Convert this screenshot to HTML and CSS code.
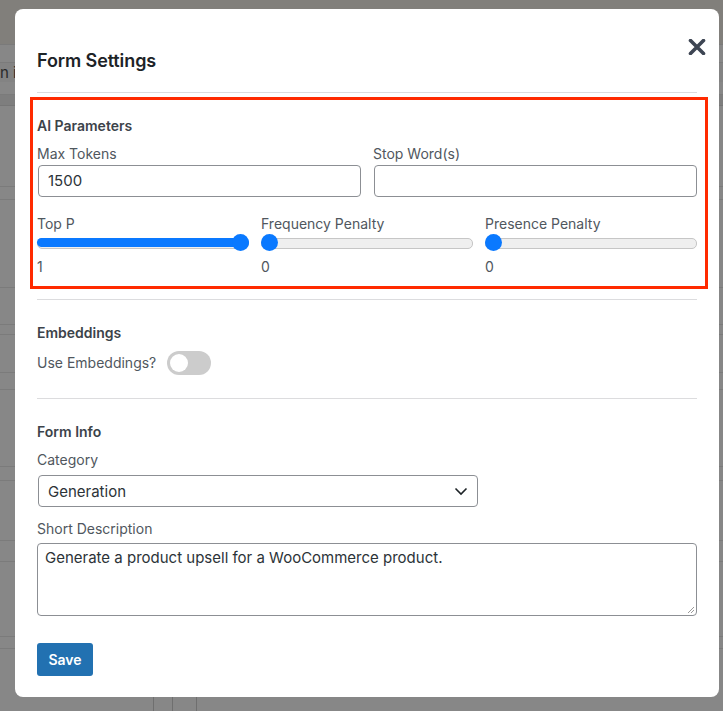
FILE: index.html
```html
<!DOCTYPE html>
<html lang="en">
<head>
<meta charset="utf-8">
<title>Form Settings</title>
<link rel="stylesheet" href="styles.css">
</head>
<body>
<div class="page">
  <div class="bg-top"></div>
  <div class="bg-row bg-h18"></div>
  <div class="bg-row bg-text"><span>n icon</span></div>
  <div class="bg-row bg-h13"></div>
  <div class="bg-band"></div>
  <div class="bg-row bg-h81"></div>
  <div class="bg-row bg-h13"></div>
  <div class="bg-row bg-h88"></div>
  <div class="bg-row bg-h37"></div>
  <div class="bg-row bg-h10"></div>
  <div class="bg-row bg-h38"></div>
  <div class="bg-row bg-h17"></div>
  <div class="bg-row bg-h77"></div>
  <div class="bg-row bg-h14"></div>
  <div class="bg-row bg-h60"></div>
  <div class="bg-row bg-h21"></div>
  <div class="bg-row bg-h75"></div>
  <div class="bg-row bg-h12"></div>
  <div class="bg-foot">
    <span class="vline"></span><span class="vline"></span><span class="vline"></span>
  </div>
</div>

<div class="modal">
  <button class="close" aria-label="Close">
    <svg width="18" height="16" viewBox="0 0 18 16"><path d="M2.5 1.5 L15.5 14.5 M15.5 1.5 L2.5 14.5" stroke="#3d4553" stroke-width="3.6" stroke-linecap="round" fill="none"/></svg>
  </button>
  <h2 class="title">Form Settings</h2>
  <hr class="divider first">

  <section class="highlight">
    <h3 class="heading">AI Parameters</h3>
    <div class="grid2">
      <div class="field">
        <label class="label">Max Tokens</label>
        <div class="input">1500</div>
      </div>
      <div class="field">
        <label class="label">Stop Word(s)</label>
        <div class="input"></div>
      </div>
    </div>
    <div class="grid3">
      <div class="field">
        <label class="label">Top P</label>
        <div class="range"><div class="fill" style="width:100%"></div><div class="thumb" style="left:100%"></div></div>
        <div class="value">1</div>
      </div>
      <div class="field">
        <label class="label">Frequency Penalty</label>
        <div class="range"><div class="fill" style="width:0%"></div><div class="thumb" style="left:0%"></div></div>
        <div class="value">0</div>
      </div>
      <div class="field">
        <label class="label">Presence Penalty</label>
        <div class="range"><div class="fill" style="width:0%"></div><div class="thumb" style="left:0%"></div></div>
        <div class="value">0</div>
      </div>
    </div>
  </section>

  <hr class="divider after-hl">

  <section class="block">
    <h3 class="heading">Embeddings</h3>
    <div class="toggle-row">
      <span class="label">Use Embeddings?</span>
      <span class="toggle"><span class="knob"></span></span>
    </div>
  </section>

  <hr class="divider after-emb">

  <section class="block">
    <h3 class="heading">Form Info</h3>
    <label class="label cat-label">Category</label>
    <div class="select">
      <span>Generation</span>
      <svg width="14" height="9" viewBox="0 0 14 9"><path d="M1.5 1.5 L7 7 L12.5 1.5" stroke="#1d2327" stroke-width="1.6" fill="none"/></svg>
    </div>
    <label class="label desc-label">Short Description</label>
    <div class="textarea">Generate a product upsell for a WooCommerce product.
      <svg class="grip" width="9" height="9" viewBox="0 0 9 9"><path d="M8 2 L2 8 M8 5 L5 8" stroke="#9a9a9a" stroke-width="1" fill="none"/></svg>
    </div>
  </section>

  <button class="save">Save</button>
</div>
</body>
</html>
```

FILE: styles.css
```css
* { box-sizing: border-box; }

html, body {
  margin: 0;
  padding: 0;
}

body {
  width: 723px;
  height: 711px;
  overflow: hidden;
  position: relative;
  background: #878787;
  font-family: Inter, "Noto Sans", sans-serif;
}

/* dimmed page behind the modal */
.page {
  display: flex;
  flex-direction: column;
  width: 723px;
  height: 711px;
}
.bg-top {
  height: 45px;
  background: #817f7b;
  border-bottom: 1px solid #7a7a7a;
  flex: none;
}
.bg-row {
  flex: none;
  border-bottom: 1px solid #7b7b7b;
}
.bg-text {
  height: 19px;
  background: #838383;
  font-size: 15px;
  line-height: 19px;
  color: #2a2a2a;
  padding-left: 0;
  border-bottom: none;
}
.bg-band {
  height: 11px;
  background: #7e7e7e;
  border-bottom: 1px solid #767676;
  flex: none;
}
.bg-h10 { height: 10px; }
.bg-h12 { height: 12px; }
.bg-h13 { height: 13px; }
.bg-h14 { height: 14px; }
.bg-h17 { height: 17px; }
.bg-h18 { height: 18px; }
.bg-h21 { height: 21px; }
.bg-h37 { height: 37px; }
.bg-h38 { height: 38px; }
.bg-h60 { height: 60px; }
.bg-h75 { height: 75px; }
.bg-h77 { height: 77px; }
.bg-h81 { height: 81px; }
.bg-h88 { height: 88px; }
.bg-foot {
  flex: 1;
  display: flex;
  padding-left: 153px;
}
.vline {
  width: 1px;
  background: #6f6f6f;
  margin-right: 18px;
}
.vline:nth-child(2) { margin-right: 23px; }

/* modal */
.modal {
  position: absolute;
  left: 15px;
  top: 9px;
  width: 704px;
  height: 688px;
  background: #fff;
  border-radius: 8px;
  padding: 40px 22px 21px;
  color: #50575e;
}

.close {
  position: absolute;
  top: 30px;
  right: 13px;
  width: 18px;
  height: 16px;
  padding: 0;
  border: 0;
  background: none;
  display: flex;
}

.title {
  margin: 0;
  font-size: 18px;
  line-height: 24px;
  font-weight: 600;
  color: #1d2327;
  letter-spacing: -0.1px;
}

.divider {
  border: 0;
  height: 1px;
  background: #dcdcde;
  margin: 0;
}
.divider.first { margin-top: 19px; }
.divider.after-hl { margin-top: 10px; }
.divider.after-emb { margin-top: 23px; }

.highlight {
  margin: 4px -11px 0 -7px;
  border: 3px solid #ff2a00;
  padding: 16px 8px 9px 4px;
}

.heading {
  margin: 0;
  font-size: 14px;
  line-height: 20px;
  font-weight: 600;
  color: #3c434a;
}

.label {
  display: block;
  font-size: 14px;
  line-height: 20px;
  color: #50575e;
}

.grid2 {
  display: grid;
  grid-template-columns: 1fr 1fr;
  column-gap: 12px;
  margin-top: 8px;
}
.grid2 .input { margin-top: 1px; }

.input {
  height: 32px;
  border: 1px solid #8c8f94;
  border-radius: 4px;
  padding: 0 9px;
  font-size: 15px;
  line-height: 30px;
  color: #2c3338;
  margin-left: 1px;
}

.grid3 {
  display: grid;
  grid-template-columns: 1fr 1fr 1fr;
  column-gap: 12px;
  margin-top: 17px;
}

.range {
  position: relative;
  height: 17px;
}
.range::before {
  content: "";
  position: absolute;
  left: 0;
  right: 0;
  top: 4px;
  height: 9px;
  border-radius: 5px;
  background: #efefef;
  border: 1px solid #c6c6c6;
}
.range .fill {
  position: absolute;
  left: 0;
  top: 4px;
  height: 9px;
  border-radius: 5px;
  background: #0a79ff;
}
.range .thumb {
  position: absolute;
  top: 0;
  width: 17px;
  height: 17px;
  border-radius: 50%;
  background: #0a79ff;
}
.range .thumb[style*="left:100%"] { transform: translateX(-100%); }

.value {
  margin-top: 6px;
  font-size: 14px;
  line-height: 20px;
  color: #50575e;
}

.block .heading { margin-top: 23px; }

.toggle-row {
  display: flex;
  align-items: center;
  gap: 11px;
  margin-top: 8px;
  height: 24px;
}
.toggle {
  width: 44px;
  height: 24px;
  border-radius: 12px;
  background: #cccccc;
  padding: 3px;
  display: flex;
}
.knob {
  width: 18px;
  height: 18px;
  border-radius: 50%;
  background: #fff;
}

.cat-label { margin-top: 8px; }

.select {
  margin-top: 5px;
  width: 440px;
  height: 32px;
  border: 1px solid #8c8f94;
  border-radius: 4px;
  padding: 0 9px;
  display: flex;
  align-items: center;
  justify-content: space-between;
  font-size: 15px;
  color: #2c3338;
  margin-left: 1px;
}

.desc-label { margin-top: 12px; }

.textarea {
  position: relative;
  margin-top: 4px;
  height: 73px;
  border: 1px solid #8c8f94;
  border-radius: 4px;
  padding: 4px 7px;
  font-size: 15px;
  line-height: 20px;
  color: #2c3338;
}
.grip {
  position: absolute;
  right: 1px;
  bottom: 1px;
}

.save {
  display: block;
  margin-top: 27px;
  width: 56px;
  height: 33px;
  border: 0;
  border-radius: 3px;
  background: #2271b1;
  color: #fff;
  font-family: Inter, "Noto Sans", sans-serif;
  font-size: 14px;
  font-weight: 600;
  padding: 0;
}
```
